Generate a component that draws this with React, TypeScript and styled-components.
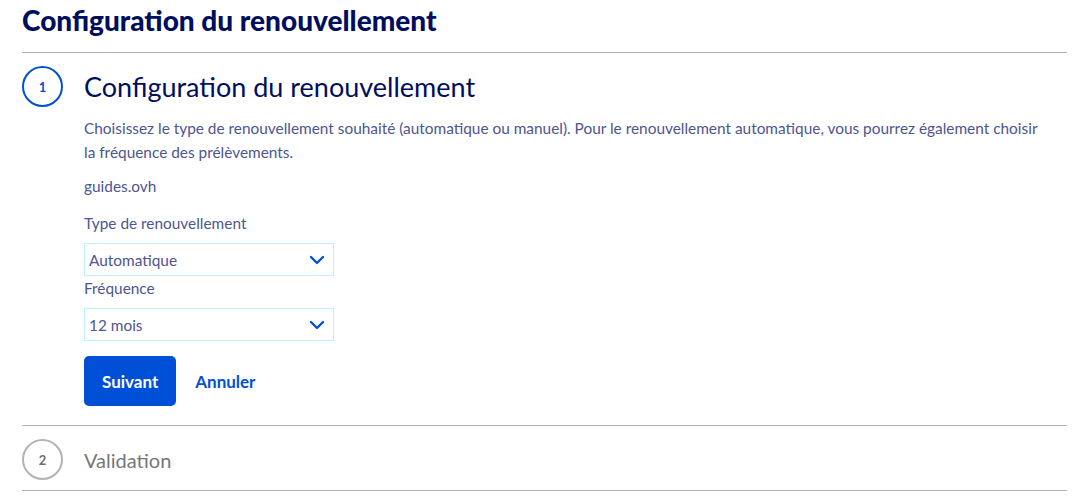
import styled, { createGlobalStyle } from 'styled-components';

const GlobalStyle = createGlobalStyle`
  * { box-sizing: border-box; }
  body {
    margin: 0;
    background: #ffffff;
    font-family: 'Lato', 'Liberation Sans', sans-serif;
  }
`;

const ChevronDown = () => (
  <svg width='16' height='10' viewBox='0 0 16 10' fill='none'>
    <path
      d='M2 2l6 6 6-6'
      stroke='#0050d7'
      strokeWidth='2.4'
      strokeLinecap='round'
      strokeLinejoin='round'
    />
  </svg>
);

type Option = { label: string; value: string };

const SelectField = ({ value, options }: { value: string; options: Option[] }) => (
  <SelectWrapper>
    <Select defaultValue={value}>
      {options.map(o => (
        <option key={o.value} value={o.value}>
          {o.label}
        </option>
      ))}
    </Select>
    <ChevronSlot>
      <ChevronDown />
    </ChevronSlot>
  </SelectWrapper>
);

const App = () => {
  return (
    <Page>
      <GlobalStyle />
      <PageTitle>Configuration du renouvellement</PageTitle>

      <Step $first>
        <StepHeader>
          <StepBadge $active>1</StepBadge>
          <StepTitle $active>Configuration du renouvellement</StepTitle>
        </StepHeader>
        <StepBody>
          <Description>
            Choisissez le type de renouvellement souhaité (automatique ou manuel). Pour le
            renouvellement automatique, vous pourrez également choisir la fréquence des
            prélèvements.
          </Description>
          <Domain>guides.ovh</Domain>

          <Label>Type de renouvellement</Label>
          <SelectField
            value='auto'
            options={[
              { label: 'Automatique', value: 'auto' },
              { label: 'Manuel', value: 'manual' },
            ]}
          />
          <Label $tight>Fréquence</Label>
          <SelectField
            value='12'
            options={[
              { label: '1 mois', value: '1' },
              { label: '12 mois', value: '12' },
            ]}
          />

          <Actions>
            <PrimaryButton type='button'>Suivant</PrimaryButton>
            <LinkButton type='button'>Annuler</LinkButton>
          </Actions>
        </StepBody>
      </Step>

      <Step>
        <StepHeader>
          <StepBadge>2</StepBadge>
          <StepTitle>Validation</StepTitle>
        </StepHeader>
      </Step>
    </Page>
  );
};

const Page = styled.div`
  width: 1080px;
  padding: 0 13px 0 22px;
  color: #4d5592;
`;

const PageTitle = styled.h1`
  margin: 0;
  padding-top: 3px;
  height: 53px;
  font-family: 'Lato', sans-serif;
  font-weight: 900;
  font-size: 28px;
  line-height: 34px;
  color: #000e5e;
  border-bottom: 1px solid #b3b3b3;
`;

const Step = styled.section<{ $first?: boolean }>`
  border-bottom: 1px solid #b3b3b3;
  padding-bottom: ${p => (p.$first ? '19px' : '10px')};
`;

const StepHeader = styled.div`
  display: flex;
  align-items: center;
  gap: 21px;
  padding-top: 13px;
`;

const StepBadge = styled.span<{ $active?: boolean }>`
  width: 41px;
  height: 41px;
  flex-shrink: 0;
  border-radius: 50%;
  border: 2px solid ${p => (p.$active ? '#0050d7' : '#b3b3b3')};
  color: ${p => (p.$active ? '#0050d7' : '#6e6e6e')};
  display: flex;
  align-items: center;
  justify-content: center;
  font-weight: 700;
  font-size: 13px;
`;

const StepTitle = styled.h2<{ $active?: boolean }>`
  margin: 0;
  font-weight: 400;
  font-size: ${p => (p.$active ? '27px' : '20px')};
  line-height: 36px;
  color: ${p => (p.$active ? '#000e5e' : '#777777')};
`;

const StepBody = styled.div`
  padding-left: 62px;
  padding-top: 2px;
`;

const Description = styled.p`
  max-width: 965px;
  margin: 7px 0 0;
  font-size: 15.4px;
  line-height: 24px;
  color: #4d5592;
`;

const Domain = styled.p`
  margin: 10px 0 0;
  font-size: 15.4px;
  line-height: 24px;
`;

const Label = styled.div<{ $tight?: boolean }>`
  margin-top: ${p => (p.$tight ? '0' : '13px')};
  padding-bottom: 8px;
  font-size: 15.4px;
  line-height: 24px;
  color: #4d5592;
`;

const SelectWrapper = styled.div`
  position: relative;
  width: 250px;
  height: 33px;
`;

const Select = styled.select`
  appearance: none;
  width: 100%;
  height: 100%;
  padding: 0 36px 0 4px;
  border: 1px solid #bef1ff;
  border-radius: 0;
  background: #ffffff;
  font-family: 'Lato', sans-serif;
  font-size: 15.4px;
  color: #4d5592;
  outline: none;
`;

const ChevronSlot = styled.span`
  position: absolute;
  right: 9px;
  top: 50%;
  transform: translateY(-50%);
  display: flex;
  pointer-events: none;
`;

const Actions = styled.div`
  display: flex;
  align-items: center;
  gap: 19px;
  margin-top: 15px;
`;

const PrimaryButton = styled.button`
  height: 50px;
  padding: 0 18px;
  border: none;
  border-radius: 5px;
  background: #0050d7;
  color: #ffffff;
  font-family: 'Lato', sans-serif;
  font-weight: 700;
  font-size: 17px;
  cursor: pointer;
`;

const LinkButton = styled.button`
  border: none;
  background: transparent;
  padding: 0;
  color: #0050d7;
  font-family: 'Lato', sans-serif;
  font-weight: 700;
  font-size: 17px;
  cursor: pointer;
`;

export default App;
